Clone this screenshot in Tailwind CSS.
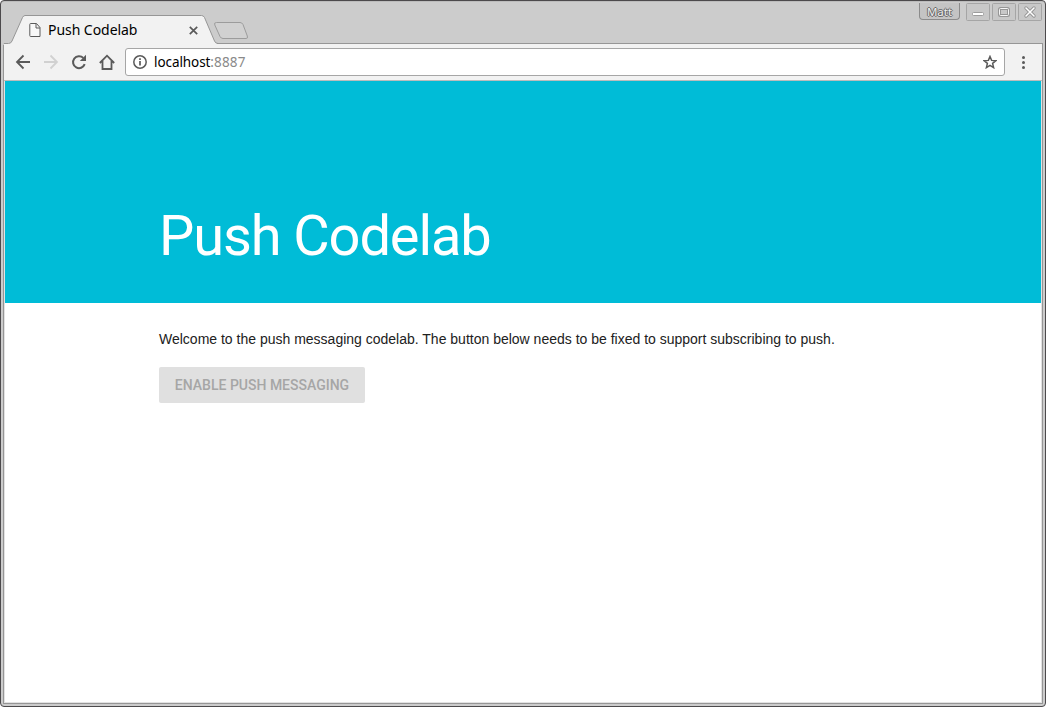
<!DOCTYPE html>
<html lang="en">
<head>
<meta charset="utf-8">
<title>Push Codelab</title>
<script src="https://cdn.jsdelivr.net/npm/@tailwindcss/browser@4"></script>
</head>
<body class="bg-white overflow-hidden">
<div class="relative flex h-[707px] w-[1046px] flex-col rounded-[4px] border border-[#4c4a4c] bg-[#cccccc] px-[2px] pb-[2px] shadow-[inset_0_1px_0_#bcbcbc]">
  <!-- tab outline -->
  <svg class="absolute left-[-1px] top-[-1px]" width="260" height="45" viewBox="0 0 260 45" fill="none">
    <path d="M3 44V43.5H8.500Q11 43.500 12 41L22.500 17.500Q23.500 15.500 25 15.500H201.500Q203.500 15.500 204.500 17.500L214.500 41Q215.500 43.500 218 43.500V45H4Z" fill="#f2f2f2"/>
    <path d="M4 43.500H8.500Q11 43.500 12 41L22.500 17.500Q23.500 15.500 25 15.500H201.500Q203.500 15.500 204.500 17.500L214.500 41Q215.500 43.500 218 43.500" stroke="#969696"/>
    <path d="M216.500 22.500H240Q242 22.500 243 24.500L247.300 36Q248.300 38.500 246 38.500H223Q221 38.500 220 36.500L214.800 25Q213.700 22.500 216.500 22.500Z" fill="#d1d1d1" stroke="#9c9c9c"/>
  </svg>
  <header class="relative flex h-[42px] shrink-0 items-start">
    <div class="flex h-[28px] w-[201px] items-center mt-[15px] pl-[26px]">
      <svg class="shrink-0" width="12" height="14" viewBox="0 0 12 14" fill="none" stroke="#5a5a5a"><path d="M1.500 .5H7.500L11 4.500V13.500H1.500Q.8 13.500 .8 12.500V1.500Q.8 .5 1.500 .5ZM7 .8V5H11" fill="#f8f8f8"/></svg>
      <span class="ml-[7px] whitespace-nowrap font-['Noto_Sans',sans-serif] text-[14px] leading-5 tracking-[-0.05px] text-black">Push Codelab</span>
      <svg class="ml-auto mr-[6px]" width="9" height="9" viewBox="0 0 9 9" stroke="#5a5a5a" stroke-width="1.700"><path d="M.8.800 8.200 8.200M8.200.800.800 8.200"/></svg>
    </div>
    <div class="ml-auto mr-px mt-[2px] flex items-start">
      <div class="mr-[6px] flex h-[17px] w-[41px] items-center justify-center rounded-b-[4px] border border-t-0 border-[#8b8b8b] bg-[#c4c4c4] pt-px font-['Noto_Sans',sans-serif] text-[11.500px] leading-4 text-[#eeeeee] antialiased [text-shadow:1px_0_#666,-1px_0_#666,0_1px_#666,0_-1px_#666]">Matt</div>
      <div class="flex gap-[2px]">
        <svg width="24" height="18" viewBox="0 0 24 18" fill="none"><rect x=".5" y=".5" width="23" height="17" rx="1" fill="#c8c8c8" stroke="#a5a5a5"/><rect x="6.500" y="9.500" width="11" height="3" rx="1" fill="#fff" stroke="#9c9c9c"/></svg>
        <svg width="24" height="18" viewBox="0 0 24 18" fill="none"><rect x=".5" y=".5" width="23" height="17" rx="1" fill="#c8c8c8" stroke="#a5a5a5"/><rect x="7.500" y="5.500" width="9" height="7" rx="1" stroke="#969696" stroke-width="3"/><rect x="7.500" y="5.500" width="9" height="7" rx="1" stroke="#f4f4f4"/></svg>
        <svg width="24" height="18" viewBox="0 0 24 18" fill="none"><rect x=".5" y=".5" width="23" height="17" rx="1" fill="#c8c8c8" stroke="#a5a5a5"/><path d="m8 5 8 8m0-8-8 8" stroke="#969696" stroke-width="3.400" stroke-linecap="round"/><path d="m8 5 8 8m0-8-8 8" stroke="#fff" stroke-width="1.500" stroke-linecap="round"/></svg>
      </div>
    </div>
  </header>
  <div class="flex min-h-0 grow flex-col border border-[#969696] border-t-0 px-[1px] pb-[1px] bg-[#e2e2e2]">
    <div class="-mx-[1px] flex h-[38px] shrink-0 items-center border-b border-[#bcbcbc] bg-[#f2f2f2] pl-[11px] text-[#5a5a5a]">
      <svg width="16" height="16" viewBox="0 0 16 16" fill="none" stroke="#5a5a5a" stroke-width="1.800"><path d="M15 8H2.500M8.500 1.500 2 8l6.500 6.500"/></svg>
      <svg class="ml-[12px]" width="16" height="16" viewBox="0 0 16 16" fill="none" stroke="#d1d1d1" stroke-width="1.800"><path d="M1 8h12.500M7.500 1.500 14 8l-6.500 6.500"/></svg>
      <svg class="ml-[12px]" width="16" height="16" viewBox="0 0 16 16" fill="none"><path d="M13.700 10.200A6 6 0 1 1 12.300 3.900" stroke="#5a5a5a" stroke-width="2"/><path d="M15 .800V7H8.800Z" fill="#5a5a5a"/></svg>
      <svg class="ml-[12px]" width="16" height="16" viewBox="0 0 16 16" fill="none" stroke="#5a5a5a" stroke-width="1.800"><path d="M.800 9 8 1.700 15.200 9M3.500 7V15H12.500V7"/></svg>
      <div class="ml-[10px] flex h-[28px] w-[880px] items-center rounded-[3px] border border-[#a6a6a6] bg-white pl-[7px] pr-[7px]">
        <svg width="14" height="14" viewBox="0 0 14 14" fill="none" stroke="#5a5a5a"><circle cx="7" cy="7" r="6.200" stroke-width="1.500"/><path d="M7 6v4.500M7 3.300V5" stroke-width="1.700"/></svg>
        <span class="ml-[7px] font-['Noto_Sans',sans-serif] text-[13.500px] leading-5 tracking-[-0.080px] text-black">localhost<span class="tracking-[0.150px] text-[#8a8a8a]">:8887</span></span>
        <svg class="ml-auto" width="14" height="14" viewBox="0 0 14 14" fill="none" stroke="#5a5a5a" stroke-width="1.500"><path d="m7 1.500 1.600 3.900 4.200.3-3.200 2.700 1 4.200L7 10.300l-3.600 2.300 1-4.200L1.200 5.700l4.200-.3Z"/></svg>
      </div>
      <svg class="ml-[17px] mt-px" width="3" height="13" viewBox="0 0 3 13" fill="#5a5a5a"><circle cx="1.500" cy="1.500" r="1.500"/><circle cx="1.500" cy="6.500" r="1.500"/><circle cx="1.500" cy="11.500" r="1.500"/></svg>
    </div>
    <section class="flex h-[222px] shrink-0 items-end bg-[#00bcd7] pb-[35px] pl-[154px]">
      <h1 class="whitespace-nowrap font-[Roboto,sans-serif] text-[56px] font-normal leading-[64px] tracking-[-0.02em] text-white">Push Codelab</h1>
    </section>
    <main class="grow bg-white pl-[154px] pt-[24px]">
      <p class="font-['Liberation_Sans',sans-serif] text-[14px] leading-6 text-[#212121]">Welcome to the push messaging codelab. The button below needs to be fixed to support subscribing to push.</p>
      <button disabled class="mt-4 block h-9 w-[206px] whitespace-nowrap rounded-[2px] bg-[#e0e0e0] text-center font-[Roboto,sans-serif] text-[14px] font-medium leading-9 text-[#a6a6a6]">ENABLE PUSH MESSAGING</button>
    </main>
  </div>
  <!-- toolbar edge beside the active tab -->
  <div class="absolute left-[216px] right-[2px] top-[42px] h-px bg-[#969696]"></div>
</div>
</body>
</html>
